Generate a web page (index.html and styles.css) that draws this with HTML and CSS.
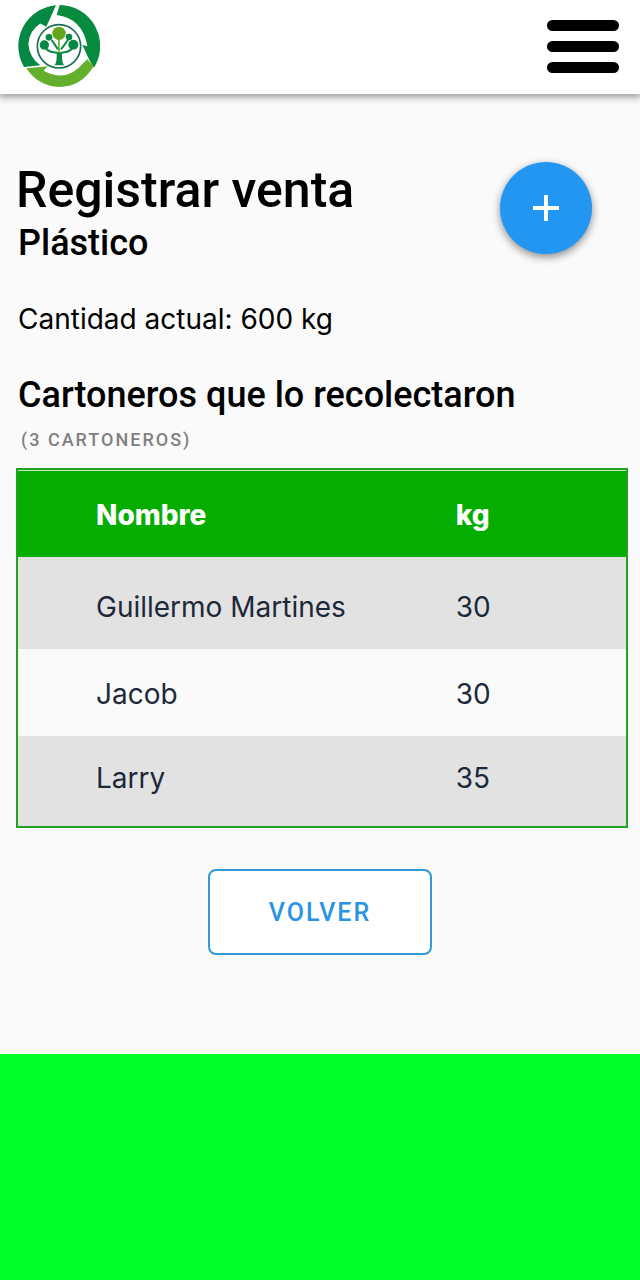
FILE: index.html
```html
<!DOCTYPE html>
<html lang="es">
<head>
<meta charset="utf-8">
<meta name="viewport" content="width=device-width, initial-scale=1">
<title>Registrar venta</title>
<link rel="stylesheet" href="styles.css">
</head>
<body class="page">
<header class="topbar">
  <a class="logo" href="#" aria-label="Inicio">
    <svg class="logo-art" viewBox="24 15 246 246" aria-hidden="true">
      <path fill="#058843" d="M138 16 A123 123 0 0 0 42 201 L91 196 Q57 170 55 131 Q58 92 92 70 L76 62 L109 80 Z"/>
      <path fill="#078c3f" d="M149 15 A123 123 0 0 1 252 203 L238 180 L217 134 L232 139 Q218 55 140 45 Z"/>
      <path fill="#64b02c" d="M49 205 L113 199 L101 212 Q170 250 221 188 L232 178 L251 199 Q214 261 147 261 Q84 258 49 205 Z"/>
      <circle cx="147" cy="139" r="65" fill="none" stroke="#176f50" stroke-width="5"/>
      <path fill="none" stroke="#0b8746" stroke-width="6" d="M108 145 Q116 157 142 158 M186 145 Q178 157 153 158 M125 120 L144 148 M174 120 L153 148"/>
      <path fill="none" stroke="#64b02c" stroke-width="5" d="M147 115 V165"/>
      <path fill="#0b8746" d="M140 157 H156 Q155 188 162 196 H134 Q141 188 140 157 Z"/>
      <g fill="#058843">
        <circle cx="103" cy="135" r="14"/>
        <circle cx="190" cy="134" r="15"/>
        <circle cx="117" cy="112" r="10"/>
        <circle cx="177" cy="111" r="10"/>
      </g>
      <circle cx="147" cy="100" r="20" fill="#64a51c"/>
    </svg>
  </a>
  <button class="menu" type="button" aria-label="Abrir menú">
    <span class="menu-line"></span>
    <span class="menu-line"></span>
    <span class="menu-line"></span>
  </button>
</header>
<main class="content">
  <div class="heading">
    <div>
      <h1 class="title">Registrar venta</h1>
      <h2 class="subtitle">Plástico</h2>
    </div>
    <button class="add" type="button" aria-label="Agregar">
      <svg class="add-icon" viewBox="0 0 26 26" aria-hidden="true"><path d="M13 0V26M0 13H26" stroke="#fff" stroke-width="4"/></svg>
    </button>
  </div>
  <p class="amount">Cantidad actual: 600 kg</p>
  <h2 class="subtitle" id="collectors">Cartoneros que lo recolectaron</h2>
  <p class="count">(3 CARTONEROS)</p>
  <table class="table" aria-labelledby="collectors">
    <thead>
      <tr><th class="name" scope="col">Nombre</th><th scope="col">kg</th></tr>
    </thead>
    <tbody>
      <tr><td class="name">Guillermo Martines</td><td>30</td></tr>
      <tr><td class="name">Jacob</td><td>30</td></tr>
      <tr><td class="name">Larry</td><td>35</td></tr>
    </tbody>
  </table>
  <button class="back" type="button">VOLVER</button>
</main>
<footer class="footer"></footer>
</body>
</html>
```
FILE: styles.css
```css
* {
  box-sizing: border-box;
}

.page {
  margin: 0;
  min-height: 100vh;
  display: flex;
  flex-direction: column;
  background: #fafafa;
  color: #000;
  font-family: Roboto, sans-serif;
}

.topbar {
  display: flex;
  justify-content: space-between;
  align-items: center;
  padding: 5px 21px 7px 18px;
  background: #fff;
  box-shadow: 0 2px 7px 1px rgba(0, 0, 0, 0.4);
}

.logo,
.logo-art {
  display: block;
  width: 82px;
  height: 82px;
}

.menu {
  display: flex;
  flex-direction: column;
  gap: 10px;
  width: 72px;
  padding: 0;
  border: 0;
  background: none;
}

.menu-line {
  width: 100%;
  height: 11px;
  border-radius: 6px;
  background: #000;
}

.content {
  flex: 1;
  display: flex;
  flex-direction: column;
  padding: 68px 16px 99px;
}

.heading {
  display: flex;
  justify-content: space-between;
  align-items: flex-start;
  padding-right: 32px;
}

.title {
  margin: 0 0 3px;
  font-size: 50px;
  font-weight: 500;
  line-height: 56px;
}

.subtitle {
  margin: 0;
  padding-left: 2px;
  font-size: 36px;
  font-weight: 500;
  line-height: 44px;
}

.add {
  display: flex;
  align-items: center;
  justify-content: center;
  width: 92px;
  height: 92px;
  padding: 0;
  border: 0;
  border-radius: 50%;
  background: #2196f3;
  box-shadow: 0 3px 8px rgba(0, 0, 0, 0.45);
}

.add-icon {
  width: 26px;
  height: 26px;
}

.amount {
  margin: 36px 0;
  padding-left: 2px;
  font-family: Inter, sans-serif;
  font-size: 28px;
  line-height: 36px;
}

.count {
  margin: 11px 0 16px;
  padding-left: 5px;
  color: #808080;
  font-size: 18px;
  font-weight: 500;
  line-height: 24px;
  letter-spacing: 2px;
}

.table {
  width: calc(100% + 4px);
  border: 2px solid #21a221;
  border-collapse: separate;
  border-spacing: 0;
  color: #1d2939;
  font-family: Inter, sans-serif;
  font-size: 28px;
  line-height: 36px;
}

.table th,
.table td {
  padding: 26px 0 24px;
  text-align: left;
}

.table .name {
  width: 72%;
  padding-left: 78px;
}

.table th {
  border-top: 1px solid #c4ecc4;
  background: #04ad00;
  color: #fff;
  font-weight: 800;
}

.table tbody td {
  padding: 32px 0 24px;
}

.table tbody tr:nth-child(odd) td {
  background: #e2e2e2;
}

.table tbody tr:nth-child(2) td {
  padding: 27px 0 24px;
}

.table tbody tr:last-child td {
  padding: 24px 0 30px;
}

.table tbody tr .name.name {
  padding-left: 78px;
}

.back {
  align-self: center;
  width: 224px;
  height: 86px;
  margin-top: 41px;
  border: 2px solid #3498db;
  border-radius: 8px;
  background: #fff;
  color: #2b93e4;
  font-family: Roboto, sans-serif;
  font-size: 25px;
  font-weight: 500;
  letter-spacing: 2px;
}

.footer {
  min-height: 226px;
  background: #00ff29;
}
```
